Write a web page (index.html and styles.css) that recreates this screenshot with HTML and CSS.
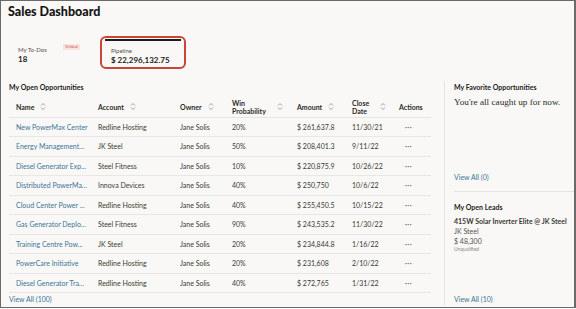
FILE: index.html
```html
<!DOCTYPE html>
<html lang="en">
<head>
  <meta charset="UTF-8" />
  <title>Sales Dashboard</title>
  <link rel="stylesheet" href="styles.css">
</head>
<body>
  <div class="frame">
    <h1 class="page-title">Sales Dashboard</h1>

    <div class="metrics">
      <div class="metric">
        <div class="metric-label">My To-Dos <span class="badge">Critical</span></div>
        <div class="metric-value">18</div>
      </div>
      <div class="metric metric-selected">
        <div class="metric-label">Pipeline</div>
        <div class="metric-value">$ 22,296,132.75</div>
      </div>
    </div>

    <div class="content">
      <div class="main-col">
        <div class="section-title">My Open Opportunities</div>
        <table class="opps">
          <colgroup>
            <col style="width:89px"><col style="width:82px"><col style="width:52px"><col style="width:65px">
            <col style="width:55px"><col style="width:47px"><col style="width:32px">
          </colgroup>
          <thead>
            <tr>
              <th><span class="th-in">Name <svg class="sort" viewBox="0 0 6 9"><path d="M1 3.5 3 1.5 5 3.5M1 5.5 3 7.5 5 5.5"/></svg></span></th>
              <th><span class="th-in">Account <svg class="sort" viewBox="0 0 6 9"><path d="M1 3.5 3 1.5 5 3.5M1 5.5 3 7.5 5 5.5"/></svg></span></th>
              <th><span class="th-in">Owner <svg class="sort" viewBox="0 0 6 9"><path d="M1 3.5 3 1.5 5 3.5M1 5.5 3 7.5 5 5.5"/></svg></span></th>
              <th><span class="th-in"><span class="th-two">Win<br>Probability</span> <svg class="sort wide" viewBox="0 0 6 9"><path d="M1 3.5 3 1.5 5 3.5M1 5.5 3 7.5 5 5.5"/></svg></span></th>
              <th><span class="th-in">Amount <svg class="sort" viewBox="0 0 6 9"><path d="M1 3.5 3 1.5 5 3.5M1 5.5 3 7.5 5 5.5"/></svg></span></th>
              <th><span class="th-in"><span class="th-two">Close<br>Date</span> <svg class="sort wide" viewBox="0 0 6 9"><path d="M1 3.5 3 1.5 5 3.5M1 5.5 3 7.5 5 5.5"/></svg></span></th>
              <th>Actions</th>
            </tr>
          </thead>
          <tbody>
            <tr><td><a>New PowerMax Center</a></td><td>Redline Hosting</td><td>Jane Solis</td><td>20%</td><td>$ 261,637.8</td><td>11/30/21</td><td class="dots">···</td></tr>
            <tr><td><a>Energy Management...</a></td><td>JK Steel</td><td>Jane Solis</td><td>50%</td><td>$ 208,401.3</td><td>9/11/22</td><td class="dots">···</td></tr>
            <tr><td><a>Diesel Generator Exp...</a></td><td>Steel Fitness</td><td>Jane Solis</td><td>10%</td><td>$ 220,875.9</td><td>10/26/22</td><td class="dots">···</td></tr>
            <tr><td><a>Distributed PowerMa...</a></td><td>Innova Devices</td><td>Jane Solis</td><td>40%</td><td>$ 250,750</td><td>10/6/22</td><td class="dots">···</td></tr>
            <tr><td><a>Cloud Center Power ...</a></td><td>Redline Hosting</td><td>Jane Solis</td><td>40%</td><td>$ 255,450.5</td><td>10/15/22</td><td class="dots">···</td></tr>
            <tr><td><a>Gas Generator Deplo...</a></td><td>Steel Fitness</td><td>Jane Solis</td><td>90%</td><td>$ 243,535.2</td><td>11/30/22</td><td class="dots">···</td></tr>
            <tr><td><a>Training Centre Pow...</a></td><td>JK Steel</td><td>Jane Solis</td><td>20%</td><td>$ 234,844.8</td><td>1/16/22</td><td class="dots">···</td></tr>
            <tr><td><a>PowerCare Initiative</a></td><td>Redline Hosting</td><td>Jane Solis</td><td>20%</td><td>$ 231,608</td><td>2/10/22</td><td class="dots">···</td></tr>
            <tr><td><a>Diesel Generator Tra...</a></td><td>Redline Hosting</td><td>Jane Solis</td><td>40%</td><td>$ 272,765</td><td>1/31/22</td><td class="dots">···</td></tr>
          </tbody>
        </table>
        <a class="view-all">View All (100)</a>
      </div>

      <div class="side-col">
        <div class="side-block favorites">
          <div class="section-title">My Favorite Opportunities</div>
          <p class="empty-msg">You're all caught up for now.</p>
          <a class="view-all">View All (0)</a>
        </div>
        <div class="side-block leads">
          <div class="section-title">My Open Leads</div>
          <div class="lead">
            <div class="lead-name">415W Solar Inverter Elite @ JK Steel</div>
            <div class="lead-line">JK Steel</div>
            <div class="lead-line">$ 48,300</div>
            <div class="lead-status">Unqualified</div>
          </div>
          <a class="view-all">View All (10)</a>
        </div>
      </div>
    </div>
  </div>
</body>
</html>
```

FILE: styles.css
```css
* {
  box-sizing: border-box;
}

body {
  margin: 0;
  font-family: Lato, "Liberation Sans", sans-serif;
  color: #2b2a28;
  background: #ffffff;
}

.frame {
  width: 576px;
  height: 308px;
  border: 1px solid #6a6a6a;
  border-right-width: 2px;
  background: #f9f8f6;
  padding: 0 0 0 7px;
  overflow: hidden;
}

.page-title {
  margin: 0;
  padding-top: 2px;
  font-size: 12.5px;
  line-height: 18px;
  font-weight: 900;
  color: #161513;
}

.metrics {
  display: flex;
  margin-top: 15px;
  height: 33px;
}

.metric {
  width: 92px;
  padding: 8px 0 0 10px;
}

.metric-selected {
  width: 86px;
  border: 2px solid #c74634;
  border-radius: 6px;
  padding: 0 2px;
}

.metric-selected::before {
  content: '';
  display: block;
  height: 2px;
  background: #1d1c1a;
  margin: 1px 1px 6px;
}

.metric-selected .metric-label,
.metric-selected .metric-value {
  padding-left: 7px;
}

.metric-label {
  font-size: 6px;
  line-height: 8px;
  color: #55524e;
}

.badge {
  display: inline-block;
  margin-left: 15px;
  padding: 0 2px;
  font-size: 4px;
  line-height: 6px;
  vertical-align: 4px;
  color: #c74634;
  background: #fbe3df;
  border-radius: 1px;
}

.metric-value {
  font-size: 8px;
  line-height: 11px;
  font-weight: 700;
  color: #1d1c1a;
}

.content {
  display: grid;
  grid-template-columns: 436px 1fr;
  margin-top: 12px;
  height: 227px;
}

.main-col {
  display: flex;
  flex-direction: column;
  padding-left: 1px;
}

.section-title {
  font-size: 7px;
  line-height: 12px;
  font-weight: 700;
  color: #1d1c1a;
}

.opps {
  border-collapse: collapse;
  table-layout: fixed;
  width: 422px;
  margin-top: 4px;
  font-size: 7px;
}

.opps th {
  height: 20px;
  padding: 0;
  text-align: left;
  font-weight: 700;
  color: #2b2a28;
  border-bottom: 1px solid #e6e4e1;
  line-height: 8px;
}

.th-in {
  display: flex;
  align-items: center;
  gap: 6px;
}

.sort {
  width: 6px;
  height: 9px;
  fill: none;
  stroke: #8d8a86;
  stroke-width: 0.8;
}

.sort.wide {
  margin-left: 5px;
}

.opps th:first-child,
.opps td:first-child {
  padding-left: 7px;
}

.opps td {
  height: 19.5px;
  padding: 0;
  border-bottom: 1px solid #e9e7e4;
  white-space: nowrap;
  overflow: hidden;
  color: #3a3835;
}

.opps a {
  color: #3a7697;
}

.dots {
  padding-left: 6px !important;
  letter-spacing: 0.5px;
}

.view-all {
  margin-top: auto;
  padding-bottom: 4px;
  font-size: 7px;
  line-height: 12px;
  color: #3a7697;
}

.side-col {
  display: flex;
  flex-direction: column;
  border-left: 1px solid #e6e4e1;
  padding-left: 9px;
  margin-bottom: 4px;
}

.side-block {
  display: flex;
  flex-direction: column;
}

.favorites {
  height: 111px;
  border-bottom: 1px solid #e6e4e1;
}

.favorites .view-all {
  padding-bottom: 8px;
}

.leads {
  flex: 1;
  padding-top: 9px;
}

.leads .view-all {
  padding-bottom: 0;
}

.empty-msg {
  margin: 3px 0 0;
  font-family: "Liberation Serif", serif;
  font-size: 9.2px;
  line-height: 12px;
  color: #2b2a28;
}

.lead {
  margin-top: 3px;
  font-size: 7px;
  line-height: 10px;
}

.lead-name {
  font-weight: 700;
  color: #3a3835;
}

.lead-line {
  color: #55524e;
}

.lead-status {
  font-size: 5px;
  line-height: 7px;
  color: #8d8a86;
}
```
